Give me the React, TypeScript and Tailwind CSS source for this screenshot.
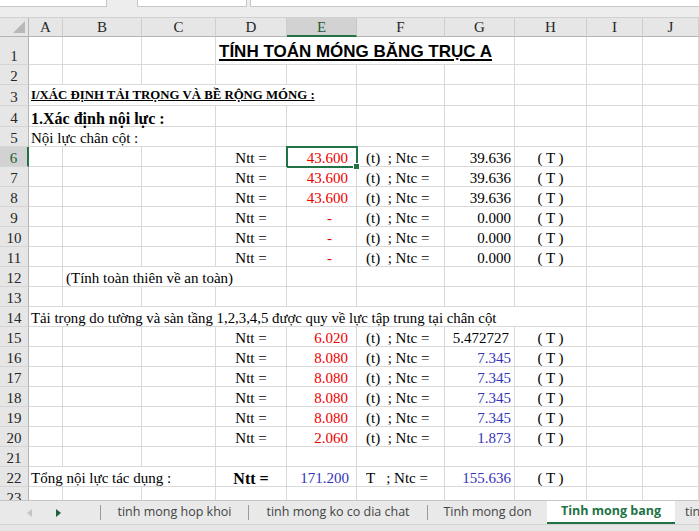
import React from "react";

type Cell = { s?: number; t?: React.ReactNode; c?: string };

const COLS = "grid-cols-[29px_34px_79px_74px_71px_70px_88px_70px_72px_56px_1fr]";
const SPAN: Record<number, string> = {
  1: "",
  2: "col-span-2",
  3: "col-span-3",
  4: "col-span-4",
  5: "col-span-5",
  6: "col-span-6",
  7: "col-span-7",
  8: "col-span-8",
};
const LETTERS = ["A", "B", "C", "D", "E", "F", "G", "H", "I", "J"];
const RED = "text-[#ee0000]";
const BLUE = "text-[#3333bb]";

function empties(n: number): Cell[] {
  return Array.from({ length: n }, () => ({}));
}

function ntt(e: string, eCls: string, g: string, gCls: string): Cell[] {
  const dash = e === "-";
  return [
    ...empties(3),
    { t: "Ntt =", c: "justify-center" },
    { t: e, c: `justify-end ${dash ? "pr-[24px]" : "pr-[8px]"} ${eCls}` },
    { t: "(t)  ; Ntc =", c: "pl-[9px] whitespace-pre" },
    { t: g, c: `justify-end pr-[3px] ${gCls}` },
    { t: "( T )", c: "justify-center whitespace-pre" },
    ...empties(2),
  ];
}

const ROWS: { n: number; h: string; cells: Cell[] }[] = [
  {
    n: 1,
    h: "h-[28px]",
    cells: [
      ...empties(3),
      {
        s: 4,
        t: "TÍNH TOÁN MÓNG BĂNG TRỤC A",
        c: "pl-[3px] pb-[3px] font-['Liberation_Sans',Arial,sans-serif] font-bold text-[17px] leading-[19px] underline underline-offset-[2px] decoration-[1.5px]",
      },
      ...empties(3),
    ],
  },
  { n: 2, h: "h-[20px]", cells: empties(10) },
  {
    n: 3,
    h: "h-[21px]",
    cells: [
      {
        s: 5,
        t: "I/XÁC ĐỊNH TẢI TRỌNG VÀ BỀ RỘNG MÓNG :",
        c: "pl-[2px] pb-[2px] font-bold text-[12.8px] underline",
      },
      ...empties(5),
    ],
  },
  {
    n: 4,
    h: "h-[21px]",
    cells: [{ s: 3, t: "1.Xác định nội lực :", c: "pl-[2px] font-bold text-[16px]" }, ...empties(7)],
  },
  {
    n: 5,
    h: "h-[20px]",
    cells: [{ s: 3, t: "Nội lực chân cột :", c: "pl-[2px]" }, ...empties(7)],
  },
  { n: 6, h: "h-[20px]", cells: ntt("43.600", RED, "39.636", "") },
  { n: 7, h: "h-[20px]", cells: ntt("43.600", RED, "39.636", "") },
  { n: 8, h: "h-[20px]", cells: ntt("43.600", RED, "39.636", "") },
  { n: 9, h: "h-[20px]", cells: ntt("-", RED, "0.000", "") },
  { n: 10, h: "h-[20px]", cells: ntt("-", RED, "0.000", "") },
  { n: 11, h: "h-[20px]", cells: ntt("-", RED, "0.000", "") },
  {
    n: 12,
    h: "h-[20px]",
    cells: [{}, { s: 3, t: "(Tính toàn thiên về an toàn)", c: "pl-[3px]" }, ...empties(6)],
  },
  { n: 13, h: "h-[20px]", cells: empties(10) },
  {
    n: 14,
    h: "h-[20px]",
    cells: [
      {
        s: 8,
        t: "Tải trọng do tường và sàn tầng 1,2,3,4,5 được quy về lực tập trung tại chân cột",
        c: "pl-[2px] text-[14.8px]",
      },
      ...empties(2),
    ],
  },
  { n: 15, h: "h-[20px]", cells: ntt("6.020", RED, "5.472727", "pr-[5px]") },
  { n: 16, h: "h-[20px]", cells: ntt("8.080", RED, "7.345", BLUE) },
  { n: 17, h: "h-[20px]", cells: ntt("8.080", RED, "7.345", BLUE) },
  { n: 18, h: "h-[20px]", cells: ntt("8.080", RED, "7.345", BLUE) },
  { n: 19, h: "h-[20px]", cells: ntt("8.080", RED, "7.345", BLUE) },
  { n: 20, h: "h-[20px]", cells: ntt("2.060", RED, "1.873", BLUE) },
  { n: 21, h: "h-[20px]", cells: empties(10) },
  {
    n: 22,
    h: "h-[20px]",
    cells: [
      { s: 3, t: "Tổng nội lực tác dụng :", c: "pl-[2px]" },
      { t: "Ntt =", c: "justify-center font-bold text-[16px]" },
      { t: "171.200", c: `justify-end pr-[7px] ${BLUE}` },
      { t: "T   ; Ntc =", c: "pl-[9px] whitespace-pre" },
      { t: "155.636", c: `justify-end pr-[3px] ${BLUE}` },
      { t: "( T )", c: "justify-center whitespace-pre" },
      ...empties(2),
    ],
  },
  { n: 23, h: "h-[20px]", cells: empties(10) },
];

function Row({ n, h, cells }: { n: number; h: string; cells: Cell[] }) {
  const active = n === 6;
  return (
    <div className={`grid ${COLS} ${h} shrink-0`}>
      <div
        className={`flex items-end justify-center leading-[15px] border-b border-b-[#d4d4d4] ${
          active
            ? "bg-[#d2d2d2] text-[#1d5e36] border-r-2 border-r-[#217346]"
            : "bg-[#e6e6e6] text-[#262626] border-r border-r-[#b4b4b4]"
        }`}
      >
        {n}
      </div>
      {cells.map((cell, i) => {
        const sel = active && i === 4;
        return (
          <div
            key={i}
            className={`relative flex items-end leading-[15px] whitespace-nowrap border-r border-b border-[#d9d9d9] ${
              SPAN[cell.s ?? 1]
            } ${cell.c ?? ""} ${sel ? "outline-2 outline-[#217346] -outline-offset-1" : ""}`}
          >
            {cell.t}
            {sel && (
              <span className="absolute right-[-4px] bottom-[-4px] w-[7px] h-[7px] bg-[#217346] border border-white z-10" />
            )}
          </div>
        );
      })}
    </div>
  );
}

export default function App() {
  return (
    <div className="w-[699px] h-[531px] overflow-hidden flex flex-col bg-[#e6e6e6] font-['Liberation_Serif','Times_New_Roman',serif] text-[15px] text-black">
      {/* formula bar remnants */}
      <div className="h-[17px] shrink-0 bg-[#ededed] flex items-start">
        <div className="w-[107px] h-[7px] bg-white border-b border-r border-[#c6c6c6]" />
        <div className="ml-[30px] w-[110px] h-[7px] bg-white border-b border-x border-[#c6c6c6]" />
        <div className="ml-[3px] flex-1 h-[7px] bg-white border-b border-l border-[#c6c6c6]" />
      </div>

      {/* column headers */}
      <div className={`grid ${COLS} h-[20px] shrink-0 bg-[#e6e6e6] border-t border-[#d0d0d0]`}>
        <div className="relative border-r border-b border-[#b4b4b4]">
          <svg width="12" height="12" viewBox="0 0 12 12" className="absolute right-[3px] bottom-[3px]">
            <polygon points="12,0 12,12 0,12" fill="#b8b8b8" />
          </svg>
        </div>
        {LETTERS.map((l) =>
          l === "E" ? (
            <div
              key={l}
              className="flex items-end justify-center leading-[16px] bg-[#d2d2d2] text-[#1d5e36] border-r border-r-[#c8c8c8] border-b-2 border-b-[#217346]"
            >
              {l}
            </div>
          ) : (
            <div
              key={l}
              className="flex items-end justify-center pb-[1px] leading-[16px] text-[#262626] border-r border-r-[#cfcfcf] border-b border-b-[#b4b4b4]"
            >
              {l}
            </div>
          )
        )}
      </div>

      {/* sheet */}
      <div className="flex-1 overflow-hidden bg-white flex flex-col">
        {ROWS.map((r) => (
          <Row key={r.n} {...r} />
        ))}
      </div>

      {/* sheet tabs */}
      <div className="h-[31px] shrink-0 border-t border-[#c6c6c6] bg-[#e9e9e9] flex flex-col font-['Open_Sans','Noto_Sans',sans-serif] text-[12.5px] text-[#444] whitespace-nowrap overflow-hidden">
        <div className="h-[23px] flex items-stretch">
          <div className="w-[100px] shrink-0 flex items-center">
            <svg width="5" height="8" viewBox="0 0 5 8" className="ml-[27px]">
              <polygon points="5,0 5,8 0,4" fill="#c4c4c4" />
            </svg>
            <svg width="5" height="8" viewBox="0 0 5 8" className="ml-[24px]">
              <polygon points="0,0 0,8 5,4" fill="#1f5f3a" />
            </svg>
          </div>
          <div className="w-px shrink-0 my-[4px] bg-[#9a9a9a]" />
          <div className="w-[147px] shrink-0 flex items-center justify-center">tinh mong hop khoi</div>
          <div className="w-px shrink-0 my-[4px] bg-[#9a9a9a]" />
          <div className="w-[178px] shrink-0 flex items-center justify-center">tinh mong ko co dia chat</div>
          <div className="w-px shrink-0 my-[4px] bg-[#9a9a9a]" />
          <div className="w-[119px] shrink-0 flex items-center justify-center">Tinh mong don</div>
          <div className="w-[128px] shrink-0 bg-white flex items-center justify-center font-bold text-[#217346] border-b-2 border-[#217346]">
            Tinh mong bang
          </div>
          <div className="pl-[10px] shrink-0 flex items-center">tinh mong</div>
        </div>
        <div className="flex-1 bg-[#e6e6e6] border-t border-[#d4d4d4]" />
      </div>
    </div>
  );
}
